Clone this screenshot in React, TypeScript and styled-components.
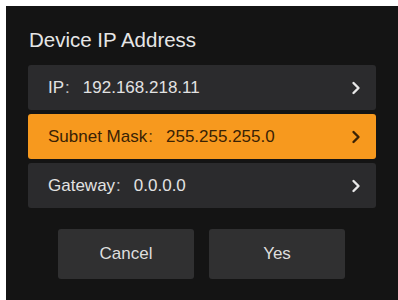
import React from 'react'
import styled, { createGlobalStyle } from 'styled-components'

const GlobalStyle = createGlobalStyle`
  html, body {
    margin: 0;
    padding: 0;
    background: #ffffff;
  }
  body {
    font-family: "Liberation Sans", "Noto Sans CJK SC", sans-serif;
  }
`

interface FieldType {
  label: string
  value: string
  active?: boolean
}

const fields: FieldType[] = [
  { label: 'IP', value: '192.168.218.11' },
  { label: 'Subnet Mask', value: '255.255.255.0', active: true },
  { label: 'Gateway', value: '0.0.0.0' },
]

const Chevron = ({ color }: { color: string }) => (
  <svg width="10" height="14" viewBox="0 0 10 14">
    <polyline
      points="2.5,2 7.5,7 2.5,12"
      fill="none"
      stroke={color}
      strokeWidth="2.4"
      strokeLinecap="round"
      strokeLinejoin="round"
    />
  </svg>
)

const FieldRow = ({ label, value, active }: FieldType) => (
  <Row active={active}>
    <RowText>
      {label}
      <Colon>:</Colon>
      {value}
    </RowText>
    <Chevron color={active ? '#3a2205' : '#e8e8e8'} />
  </Row>
)

export default function App() {
  return (
    <>
      <GlobalStyle />
      <Panel>
        <Title>Device IP Address</Title>
        <List>
          {fields.map((f) => (
            <FieldRow key={f.label} {...f} />
          ))}
        </List>
        <Actions>
          <ActionButton>Cancel</ActionButton>
          <ActionButton>Yes</ActionButton>
        </Actions>
      </Panel>
    </>
  )
}

const Panel = styled.div`
  margin: 6px 0 0 6px;
  width: 392px;
  height: 294px;
  box-sizing: border-box;
  padding: 22px 22px 0 22px;
  background: #141414;
  display: flex;
  flex-direction: column;
`

const Title = styled.div`
  font-size: 20.5px;
  line-height: 24px;
  color: #e6e6e6;
  padding-left: 1px;
`

const List = styled.div`
  margin-top: 13px;
  display: flex;
  flex-direction: column;
  gap: 4px;
`

const Row = styled.div<{ active?: boolean }>`
  height: 45px;
  box-sizing: border-box;
  padding: 0 15px 0 20px;
  border-radius: 3px;
  display: flex;
  align-items: center;
  justify-content: space-between;
  background: ${({ active }) => (active ? '#f7991e' : '#2b2b2d')};
  color: ${({ active }) => (active ? '#3a2205' : '#e2e2e2')};
`

const RowText = styled.span`
  font-size: 17px;
  line-height: 20px;
  display: flex;
  align-items: center;
`

const Colon = styled.span`
  display: inline-block;
  margin: 0 13px 0 1px;
  opacity: 0.8;
`

const Actions = styled.div`
  margin-top: 21px;
  display: flex;
  justify-content: center;
  gap: 15px;
  padding-right: 1px;
`

const ActionButton = styled.button`
  width: 136px;
  height: 50px;
  border: none;
  border-radius: 3px;
  background: #303031;
  color: #dedede;
  font-family: "Liberation Sans", sans-serif;
  font-size: 17px;
  cursor: pointer;
`
